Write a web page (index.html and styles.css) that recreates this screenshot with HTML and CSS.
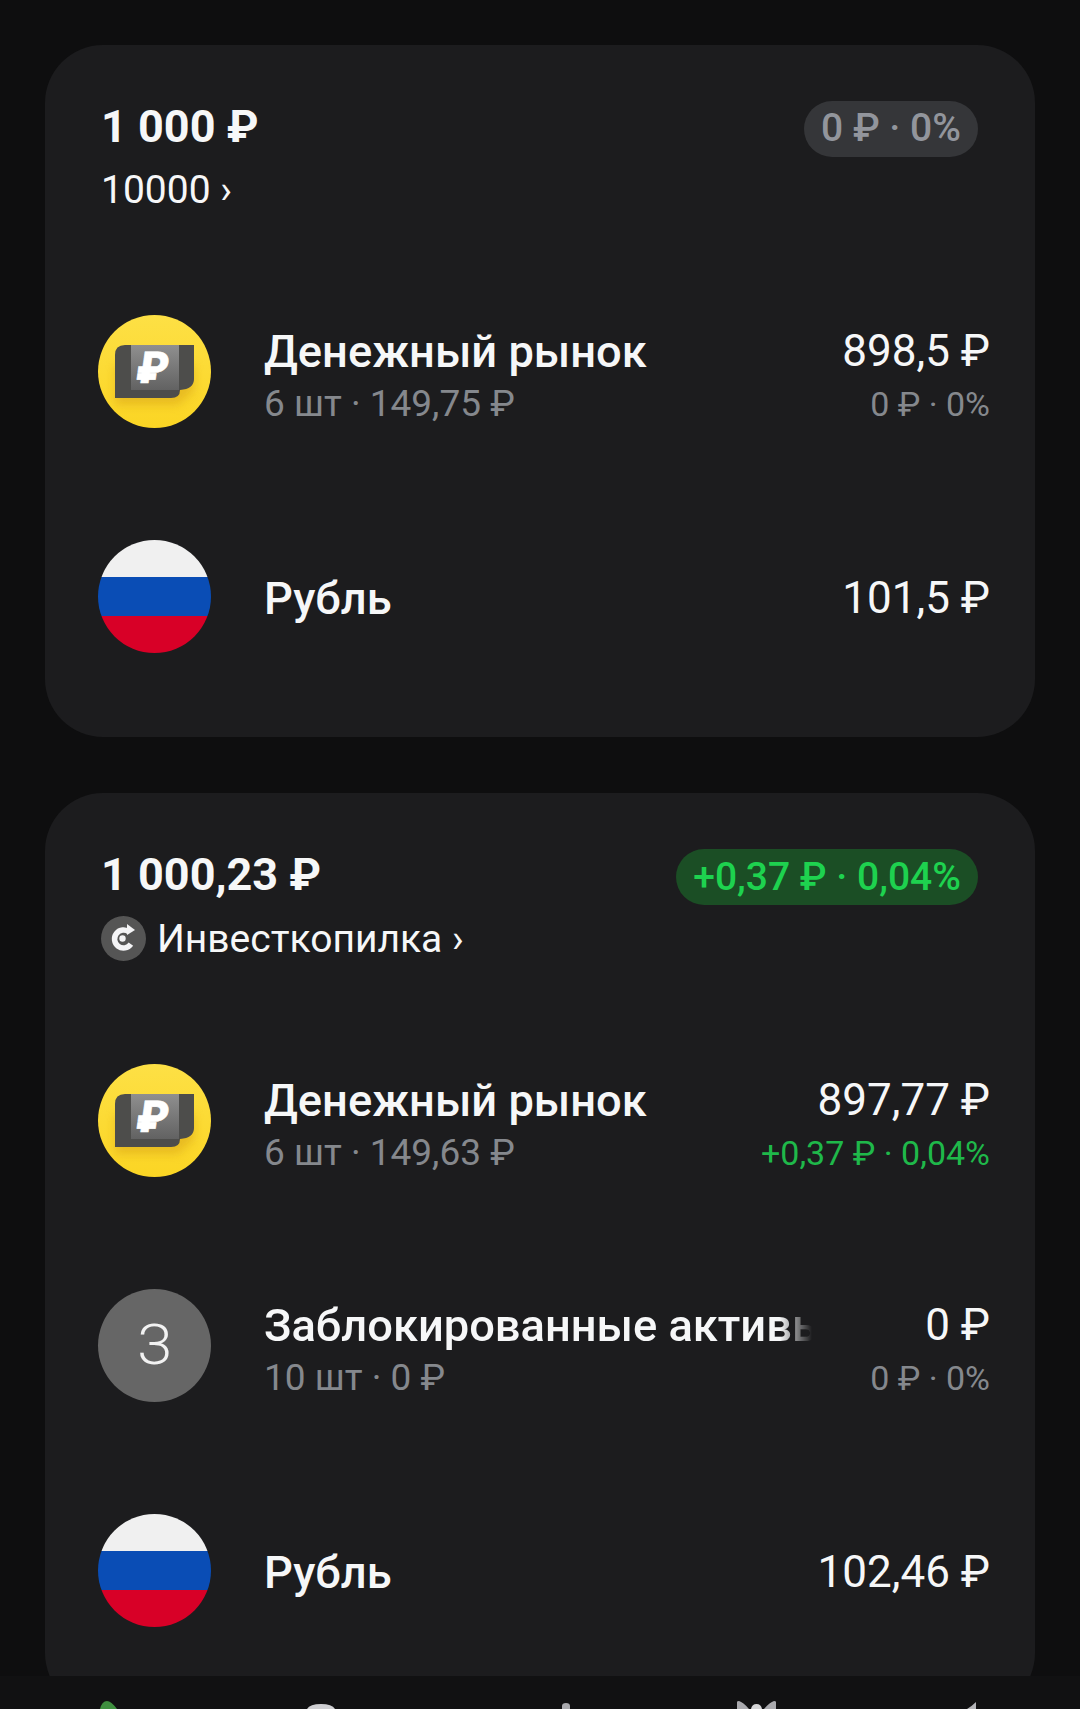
FILE: index.html
```html
<!DOCTYPE html>
<html lang="ru">
<head>
    <meta charset="UTF-8">
    <meta name="viewport" content="width=device-width, initial-scale=1.0">
    <title>Портфель</title>
    <link rel="stylesheet" href="styles.css">
</head>
<body>
    <svg class="defs" width="0" height="0">
        <defs>
            <linearGradient id="coinBg" x1="0" y1="0" x2="0" y2="1">
                <stop offset="0" stop-color="#fde045"/>
                <stop offset="1" stop-color="#fbd524"/>
            </linearGradient>
            <linearGradient id="coinMid" x1="0" y1="0" x2="0" y2="1">
                <stop offset="0" stop-color="#8f8f8f"/>
                <stop offset="1" stop-color="#626262"/>
            </linearGradient>
            <filter id="coinBlur" x="-30%" y="-30%" width="160%" height="160%">
                <feGaussianBlur stdDeviation="5"/>
            </filter>
            <clipPath id="coinClip"><circle cx="56.5" cy="56.5" r="56.5"/></clipPath>
            <symbol id="coin" viewBox="0 0 113 113">
                <circle cx="56.5" cy="56.5" r="56.5" fill="url(#coinBg)"/>
                <path clip-path="url(#coinClip)" d="M17 50h79v26l-16 14H17z" fill="#d9a514" opacity=".55" filter="url(#coinBlur)"/>
                <path d="M27 30h69v34q0 10-14 11q0 8-9 8H17V40q0-10 10-10z" fill="#4d4d4b"/>
                <rect x="33" y="30" width="48" height="45" fill="url(#coinMid)"/>
                <text x="62.500" y="68" text-anchor="middle" transform="skewX(-8)" class="coin-sign">₽</text>
            </symbol>
            <symbol id="flag" viewBox="0 0 113 113">
                <g clip-path="url(#coinClip)">
                    <rect width="113" height="37" fill="#f0f0f0"/>
                    <rect y="37" width="113" height="39" fill="#0a4db5"/>
                    <rect y="76" width="113" height="37" fill="#d80027"/>
                </g>
            </symbol>
        </defs>
    </svg>

    <main class="screen">
        <section class="card">
            <header class="card-head">
                <div class="head-left">
                    <div class="total">1 000 ₽</div>
                    <div class="account"><span>10000 ›</span></div>
                </div>
                <div class="pill">0 ₽ · 0%</div>
            </header>
            <div class="row">
                <svg class="avatar"><use href="#coin"/></svg>
                <div class="info">
                    <div class="name">Денежный рынок</div>
                    <div class="sub">6 шт · 149,75 ₽</div>
                </div>
                <div class="nums">
                    <div class="value">898,5 ₽</div>
                    <div class="sub change">0 ₽ · 0%</div>
                </div>
            </div>
            <div class="row">
                <svg class="avatar"><use href="#flag"/></svg>
                <div class="info">
                    <div class="name">Рубль</div>
                </div>
                <div class="nums">
                    <div class="value">101,5 ₽</div>
                </div>
            </div>
        </section>

        <section class="card">
            <header class="card-head">
                <div class="head-left">
                    <div class="total">1 000,23 ₽</div>
                    <div class="account">
                        <svg class="acc-icon" viewBox="0 0 45 45">
                            <circle cx="22.5" cy="22.5" r="22.5" fill="#555"/>
                            <path d="M29.900 28.200A9 9 0 1 1 28.300 16.100" fill="none" stroke="#f4f4f6" stroke-width="5.500"/>
                            <circle cx="21.500" cy="22.500" r="3.200" fill="#f4f4f6"/>
                            <path d="M26 8L34 14L26 19z" fill="#f4f4f6"/>
                        </svg>
                        <span>Инвесткопилка ›</span>
                    </div>
                </div>
                <div class="pill up">+0,37 ₽ · 0,04%</div>
            </header>
            <div class="row">
                <svg class="avatar"><use href="#coin"/></svg>
                <div class="info">
                    <div class="name">Денежный рынок</div>
                    <div class="sub">6 шт · 149,63 ₽</div>
                </div>
                <div class="nums">
                    <div class="value">897,77 ₽</div>
                    <div class="sub change gain">+0,37 ₽ · 0,04%</div>
                </div>
            </div>
            <div class="row">
                <div class="avatar letter">З</div>
                <div class="info">
                    <div class="name fade">Заблокированные активы</div>
                    <div class="sub">10 шт · 0 ₽</div>
                </div>
                <div class="nums">
                    <div class="value">0 ₽</div>
                    <div class="sub change">0 ₽ · 0%</div>
                </div>
            </div>
            <div class="row">
                <svg class="avatar"><use href="#flag"/></svg>
                <div class="info">
                    <div class="name">Рубль</div>
                </div>
                <div class="nums">
                    <div class="value">102,46 ₽</div>
                </div>
            </div>
        </section>
    </main>

    <nav class="tabbar">
        <svg class="tabs" viewBox="0 0 1080 9">
            <path d="M100 9q2-8 7-8q4 0 10 8z" fill="#3f8f3f"/>
            <path d="M307 9q3-5 14-5t14 5z" fill="#cfcfd2"/>
            <path d="M562 9v-3q0-3 4-3t4 3v3z" fill="#a9a9ad"/>
            <path d="M737 9V2q0-1 2-1q4 1 10 8zM776 9V2q0-1-2-1q-4 1-10 8z" fill="#a9a9ad"/>
            <path d="M751 9q1-5 5.500-5t5.500 5z" fill="#d5d5d7"/>
            <path d="M967 9q5-3 9-7v7z" fill="#b4b4b7"/>
        </svg>
    </nav>
</body>
</html>
```

FILE: styles.css
```css
html, body {
    margin: 0;
    padding: 0;
}
body {
    width: 1080px;
    height: 1709px;
    overflow: hidden;
    background: #0e0e0f;
    color: #f6f7f8;
    font-family: 'Roboto', sans-serif;
}
.defs {
    display: block;
    height: 0;
}
.coin-sign {
    font-family: 'Roboto', sans-serif;
    font-size: 44px;
    font-weight: 900;
    fill: #fff;
    stroke: #fff;
    stroke-width: .6;
}
.screen {
    height: 1676px;
    overflow: hidden;
    box-sizing: border-box;
    padding: 45px 45px 0;
    display: flex;
    flex-direction: column;
    gap: 56px;
}
.card {
    flex: none;
    background: #1c1c1e;
    border-radius: 58px;
    padding-bottom: 28px;
}
.card-head {
    box-sizing: border-box;
    padding: 56px 57px 46px 56px;
    display: flex;
    justify-content: space-between;
    align-items: flex-start;
}
.total {
    font-size: 45px;
    line-height: 52px;
    font-weight: 700;
}
.account {
    display: flex;
    align-items: center;
    margin-top: 14px;
    font-size: 39px;
    line-height: 46px;
    white-space: nowrap;
}
.acc-icon {
    width: 45px;
    height: 45px;
    margin: 1px 11px 1px 0;
}
.pill {
    height: 56px;
    line-height: 55px;
    padding: 0 17px;
    border-radius: 28px;
    background: #353639;
    color: #92959c;
    font-size: 39px;
    font-weight: 500;
    white-space: nowrap;
}
.pill.up {
    line-height: 57px;
    background: #1b4e25;
    color: #1ed24f;
}
.row {
    height: 225px;
    padding: 0 45px 0 53px;
    display: flex;
    align-items: center;
    gap: 53px;
}
.avatar {
    flex: none;
    width: 113px;
    height: 113px;
}
.letter {
    border-radius: 50%;
    background: #666;
    color: #f2f2f2;
    font-size: 56px;
    font-weight: 300;
    line-height: 113px;
    text-align: center;
}
.info {
    flex: 1;
    min-width: 0;
    padding-top: 4px;
}
.name {
    font-size: 45.25px;
    line-height: 52px;
    font-weight: 500;
    white-space: nowrap;
}
.name.fade {
    width: 548px;
    overflow: hidden;
    -webkit-mask-image: linear-gradient(to left, transparent, #000 32px);
    mask-image: linear-gradient(to left, transparent, #000 32px);
}
.sub {
    margin: 4px 0 -4px;
    font-size: 37px;
    line-height: 44px;
    color: #85888d;
    white-space: nowrap;
}
.sub.change {
    margin: 5px 0 -5px;
    font-size: 34px;
}
.nums {
    flex: none;
    padding-top: 2px;
    text-align: right;
}
.value {
    font-size: 44px;
    line-height: 52px;
    white-space: nowrap;
}
.sub.gain {
    color: #1fb84a;
}
.tabbar {
    height: 33px;
    background: #111112;
    display: flex;
    align-items: flex-end;
}
.tabs {
    display: block;
    width: 1080px;
    height: 9px;
}
```
